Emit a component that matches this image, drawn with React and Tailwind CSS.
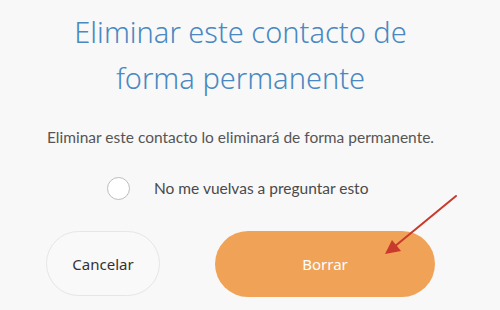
export default function App() {
  return (
    <div className="relative w-[500px] h-[310px] overflow-hidden bg-[#f8f8f8]">
      <div className="ml-[46px] w-[389px] flex flex-col items-center">
        {/* Title */}
        <h1
          className="mt-[9px] text-center text-[29px] leading-[46px] font-light text-[#4a88c2]"
          style={{ fontFamily: '"Noto Sans", sans-serif' }}
        >
          Eliminar este contacto de
          <br />
          forma permanente
        </h1>

        <p
          className="mt-[26px] text-[15.5px] leading-[20px] text-[#555555]"
          style={{ fontFamily: '"Lato", sans-serif' }}
        >
          Eliminar este contacto lo eliminará de forma permanente.
        </p>

        {/* Checkbox row */}
        <div className="mt-[30px] self-start ml-[61px] flex items-center gap-[24px]">
          <span className="w-[23px] h-[23px] rounded-full border border-[#bdbdbd] bg-white" />
          <span
            className="text-[15.5px] text-[#4a4a4a]"
            style={{ fontFamily: '"Lato", sans-serif' }}
          >
            No me vuelvas a preguntar esto
          </span>
        </div>

        {/* Buttons */}
        <div className="mt-[31px] w-full flex justify-between">
          <button
            className="w-[114px] h-[65px] rounded-full border border-[#e6e6e6] bg-[#f9f9f9] text-[15px] font-normal text-[#333333]"
            style={{ fontFamily: '"Noto Sans", sans-serif' }}
          >
            Cancelar
          </button>
          <button
            className="w-[220px] h-[66px] rounded-full bg-[#f0a257] text-[15px] font-normal text-white"
            style={{ fontFamily: '"Noto Sans", sans-serif' }}
          >
            Borrar
          </button>
        </div>
      </div>

      {/* Annotation arrow */}
      <svg
        className="absolute left-0 top-0 pointer-events-none"
        width="500"
        height="310"
        viewBox="0 0 500 310"
      >
        <line x1="456" y1="196" x2="394" y2="247" stroke="#c9392c" strokeWidth="2" strokeLinecap="round" />
        <polygon points="385,254 392,240 401,251" fill="#c9392c" />
      </svg>
    </div>
  );
}
